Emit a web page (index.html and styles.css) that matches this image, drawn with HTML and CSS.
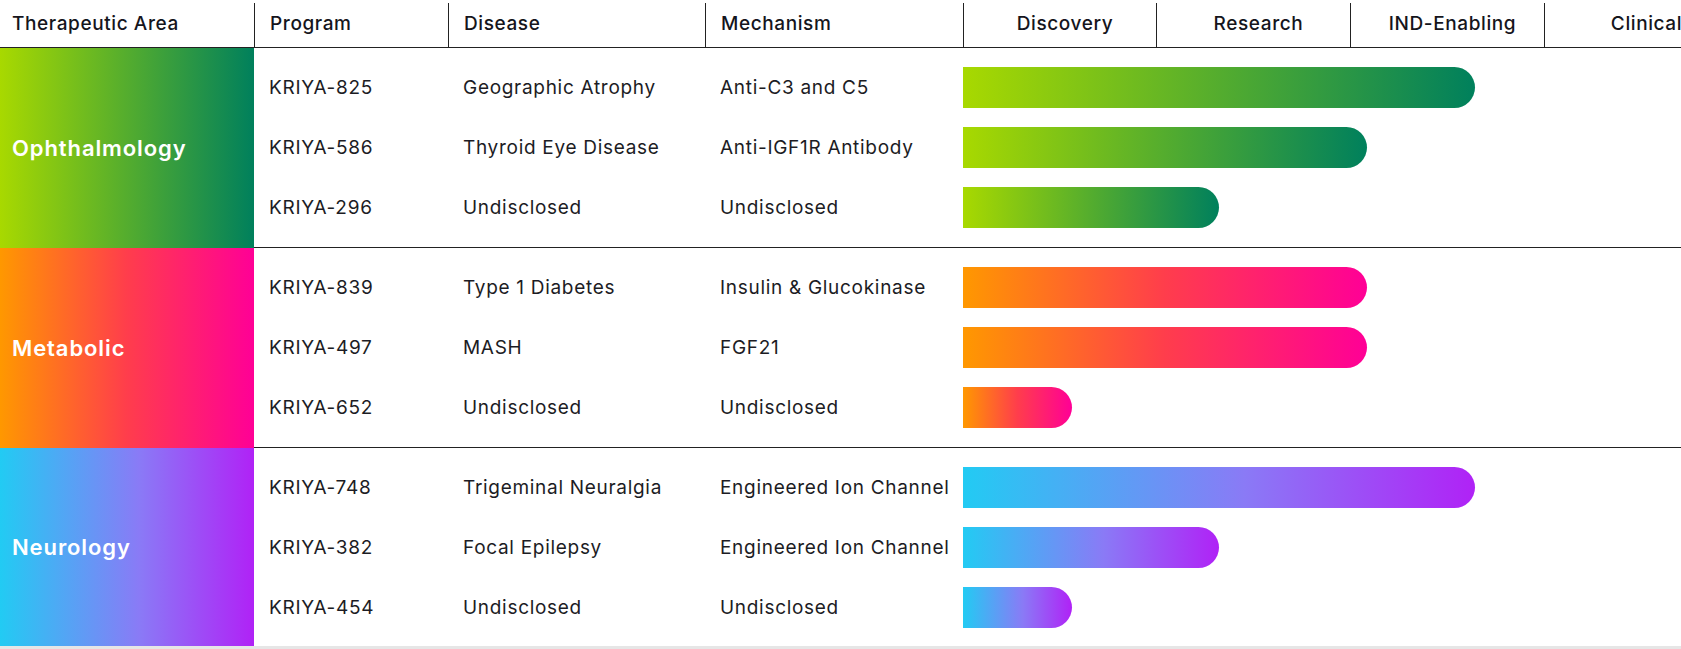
FILE: index.html
```html
<!DOCTYPE html>
<html lang="en">
<head>
<meta charset="utf-8">
<title>Pipeline</title>
<link rel="stylesheet" href="styles.css">
</head>
<body>
<div class="pipeline">
  <div class="head">
    <div class="h h-area">Therapeutic Area</div>
    <div class="h h-prog">Program</div>
    <div class="h h-dis">Disease</div>
    <div class="h h-mech">Mechanism</div>
    <div class="h h-stage">Discovery</div>
    <div class="h h-stage">Research</div>
    <div class="h h-stage">IND-Enabling</div>
    <div class="h h-stage">Clinical</div>
  </div>

  <div class="group">
    <div class="area area-oph">Ophthalmology</div>
    <div class="rows">
      <div class="row"><span>KRIYA-825</span><span>Geographic Atrophy</span><span>Anti-C3 and C5</span><div class="track"><div class="bar bar-oph" style="width:512px"></div></div></div>
      <div class="row"><span>KRIYA-586</span><span>Thyroid Eye Disease</span><span>Anti-IGF1R Antibody</span><div class="track"><div class="bar bar-oph" style="width:404px"></div></div></div>
      <div class="row"><span>KRIYA-296</span><span>Undisclosed</span><span>Undisclosed</span><div class="track"><div class="bar bar-oph" style="width:256px"></div></div></div>
    </div>
  </div>

  <div class="group">
    <div class="area area-met">Metabolic</div>
    <div class="rows">
      <div class="row"><span>KRIYA-839</span><span>Type 1 Diabetes</span><span>Insulin &amp; Glucokinase</span><div class="track"><div class="bar bar-met" style="width:404px"></div></div></div>
      <div class="row"><span>KRIYA-497</span><span>MASH</span><span>FGF21</span><div class="track"><div class="bar bar-met" style="width:404px"></div></div></div>
      <div class="row"><span>KRIYA-652</span><span>Undisclosed</span><span>Undisclosed</span><div class="track"><div class="bar bar-met" style="width:109px"></div></div></div>
    </div>
  </div>

  <div class="group group-last">
    <div class="area area-neu">Neurology</div>
    <div class="rows">
      <div class="row"><span>KRIYA-748</span><span>Trigeminal Neuralgia</span><span>Engineered Ion Channel</span><div class="track"><div class="bar bar-neu" style="width:512px"></div></div></div>
      <div class="row"><span>KRIYA-382</span><span>Focal Epilepsy</span><span>Engineered Ion Channel</span><div class="track"><div class="bar bar-neu" style="width:256px"></div></div></div>
      <div class="row"><span>KRIYA-454</span><span>Undisclosed</span><span>Undisclosed</span><div class="track"><div class="bar bar-neu" style="width:109px"></div></div></div>
    </div>
  </div>
  <div class="scroll"></div>
</div>
</body>
</html>
```
FILE: styles.css
```css
* { box-sizing: border-box; }
html, body { margin: 0; padding: 0; background: #fff; }
body {
  font-family: Inter, "Noto Sans", sans-serif;
  color: #1c1c24;
  overflow: hidden;
}
.pipeline {
  width: 1681px;
  overflow: hidden;
}
.head {
  display: grid;
  grid-template-columns: 254px 194px 257px 258px 193px 194px 194px 194px;
  width: 1738px;
  height: 48px;
  padding-top: 3px;
  border-bottom: 1px solid #222;
}
.h {
  font-size: 19px;
  letter-spacing: 0.6px;
  font-weight: 500;
  display: flex;
  align-items: center;
  padding-left: 15px;
  padding-bottom: 3px;
  color: #15151c;
  white-space: nowrap;
}
.h-area { padding-left: 12px; }
.h + .h { border-left: 1px solid #222; }
.h-stage { justify-content: center; padding-left: 10px; }

.group {
  display: flex;
  width: 1738px;
}
.area {
  width: 254px;
  flex: none;
  display: flex;
  align-items: center;
  padding-left: 12px;
  color: #fff;
  font-size: 22px;
  letter-spacing: 0.9px;
  font-weight: 600;
}
.area-oph { background: linear-gradient(90deg, #a8d900 0%, #00805c 100%); }
.area-met { background: linear-gradient(90deg, #ff9800 0%, #ff3d4c 50%, #ff0096 100%); }
.area-neu { background: linear-gradient(90deg, #22cbf3 0%, #8a7af6 55%, #b022f6 100%); }

.rows {
  flex: 1;
  padding: 9px 0 10px;
  border-bottom: 1px solid #222;
}
.group-last .rows { border-bottom: none; padding-bottom: 9px; }
.row {
  display: grid;
  grid-template-columns: 194px 257px 258px 1fr;
  height: 60px;
  align-items: center;
  font-size: 19px;
  letter-spacing: 0.7px;
}
.row span { padding-left: 15px; white-space: nowrap; }
.bar {
  height: 41px;
  border-radius: 0 21px 21px 0;
}
.bar-oph { background: linear-gradient(90deg, #a8d900 0%, #00805c 100%); }
.bar-met { background: linear-gradient(90deg, #ff9800 0%, #ff3d4c 50%, #ff0096 100%); }
.bar-neu { background: linear-gradient(90deg, #22cbf3 0%, #8a7af6 55%, #b022f6 100%); }
.scroll {
  height: 3px;
  background: #e6e6e6;
}
```
